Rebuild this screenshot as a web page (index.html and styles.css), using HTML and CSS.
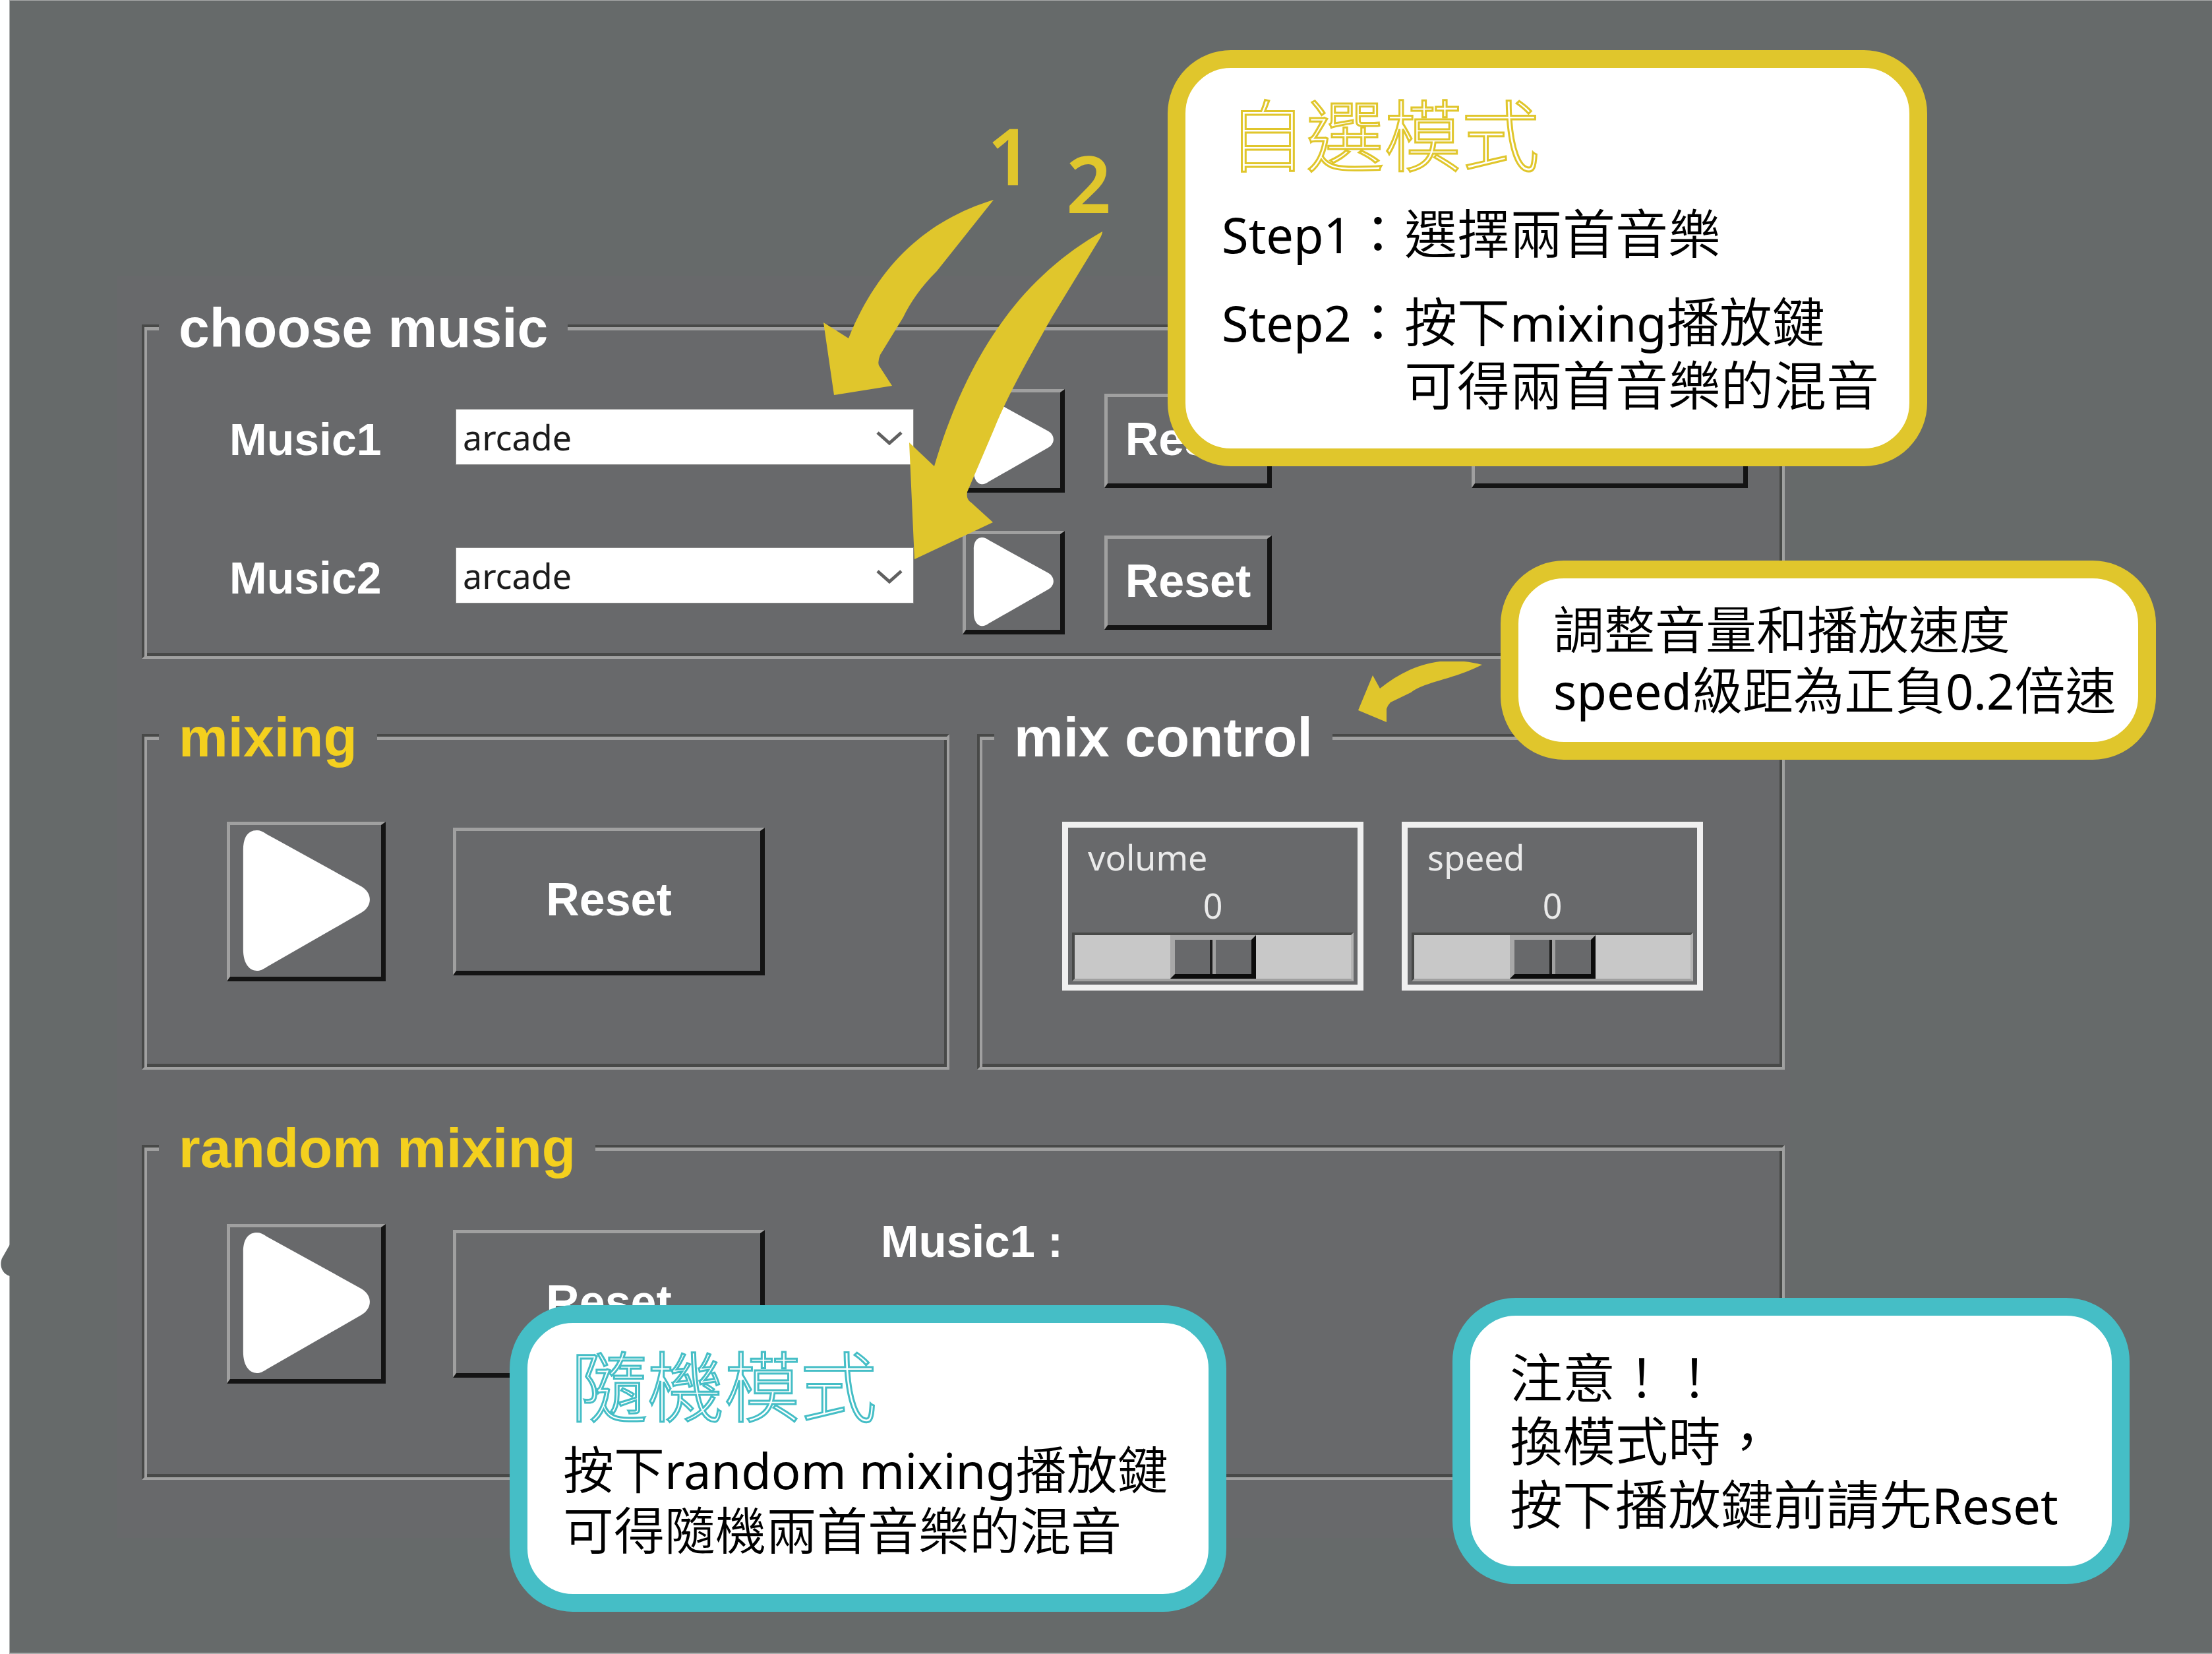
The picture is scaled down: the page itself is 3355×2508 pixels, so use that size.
FILE: index.html
```html
<!DOCTYPE html>
<html lang="zh-Hant">
<head>
<meta charset="utf-8">
<title>Music mixer guide</title>
<link rel="stylesheet" href="styles.css">
</head>
<body>
<main class="stage">
  <svg class="edge-notch" width="15" height="52" viewBox="0 0 15 52" aria-hidden="true"><path d="M15 0L3 21C-1 31 2 44 15 48Z"/></svg>

  <div class="mixer">
    <fieldset class="panel">
      <legend>choose music</legend>
      <div class="chooser">
        <div class="tracks">
          <label class="track-label" for="music1">Music1</label>
          <div class="picker">
            <select id="music1"><option>arcade</option></select>
            <svg width="40" height="26" viewBox="0 0 40 26" aria-hidden="true"><path d="M2 5L20 21L38 5"/></svg>
          </div>
          <label class="track-label" for="music2">Music2</label>
          <div class="picker">
            <select id="music2"><option>arcade</option></select>
            <svg width="40" height="26" viewBox="0 0 40 26" aria-hidden="true"><path d="M2 5L20 21L38 5"/></svg>
          </div>
        </div>
        <div class="track-buttons">
          <button class="play" type="button" aria-label="Play Music1"><svg viewBox="3 6 229 232" aria-hidden="true"><path d="M43 14C33 14 22 20 22 44V196C22 220 33 229 43 229C48 229 52 227 58 223L203 140C220 130 220 110 203 100L58 20C52 16 48 14 43 14Z"/></svg></button>
          <button class="reset" type="button">Reset</button>
          <button class="reset wide" type="button" aria-label="Reset all"></button>
          <button class="play" type="button" aria-label="Play Music2"><svg viewBox="3 6 229 232" aria-hidden="true"><path d="M43 14C33 14 22 20 22 44V196C22 220 33 229 43 229C48 229 52 227 58 223L203 140C220 130 220 110 203 100L58 20C52 16 48 14 43 14Z"/></svg></button>
          <button class="reset" type="button">Reset</button>
        </div>
      </div>
    </fieldset>

    <div class="pair">
      <fieldset class="panel">
        <legend class="gold">mixing</legend>
        <div class="deck">
          <button class="play large" type="button" aria-label="Play mix"><svg viewBox="3 6 229 232" aria-hidden="true"><path d="M43 14C33 14 22 20 22 44V196C22 220 33 229 43 229C48 229 52 227 58 223L203 140C220 130 220 110 203 100L58 20C52 16 48 14 43 14Z"/></svg></button>
          <button class="reset large" type="button">Reset</button>
        </div>
      </fieldset>
      <fieldset class="panel">
        <legend>mix control</legend>
        <div class="deck sliders">
          <div class="slider">
            <label for="volume">volume</label>
            <output for="volume">0</output>
            <input id="volume" type="range" min="-10" max="10" value="0">
          </div>
          <div class="slider">
            <label for="speed">speed</label>
            <output for="speed">0</output>
            <input id="speed" type="range" min="-10" max="10" value="0">
          </div>
        </div>
      </fieldset>
    </div>

    <fieldset class="panel">
      <legend class="gold">random mixing</legend>
      <div class="deck random">
        <button class="play large" type="button" aria-label="Play random mix"><svg viewBox="3 6 229 232" aria-hidden="true"><path d="M43 14C33 14 22 20 22 44V196C22 220 33 229 43 229C48 229 52 227 58 223L203 140C220 130 220 110 203 100L58 20C52 16 48 14 43 14Z"/></svg></button>
        <button class="reset large" type="button">Reset</button>
        <p class="now-playing">Music1 :</p>
      </div>
    </fieldset>
  </div>

  <svg class="arrow arrow-one" width="260" height="298" viewBox="1248 302 260 298" aria-hidden="true"><path d="M1507 303C1405 334 1332 402 1287 513L1249 489L1265 599L1353 585L1333 554Q1331 548 1335 538L1370 481C1380 460 1396 436 1421 411Z"/></svg>
  <svg class="arrow arrow-two" width="296" height="500" viewBox="1378 350 296 500" aria-hidden="true"><path d="M1672 351C1545 423 1466 543 1417 707L1379 671L1387 848L1506 792L1473 762Q1465 757 1467 746L1508 650C1530 596 1562 540 1596 480L1668 362Q1672 355 1672 351Z"/></svg>
  <svg class="arrow arrow-three" width="190" height="94" viewBox="2059 1003 190 94" aria-hidden="true"><path d="M2248 1008C2185 992 2137 1009 2093 1044L2082 1024L2060 1077L2103 1095V1075Q2105 1069 2109 1065L2140 1050C2160 1034 2205 1030 2248 1008Z"/></svg>
  <span class="number number-one">1</span>
  <span class="number number-two">2</span>

  <section class="callout pick">
    <h2>自選模式</h2>
    <dl class="steps">
      <dt><span class="latin">Step1</span>：</dt>
      <dd>選擇兩首音樂</dd>
      <dt><span class="latin">Step2</span>：</dt>
      <dd>按下<span class="latin">mixing</span>播放鍵<br>可得兩首音樂的混音</dd>
    </dl>
  </section>

  <section class="callout tune">
    <p>調整音量和播放速度<br><span class="latin">speed</span>級距為正負<span class="latin">0.2</span>倍速</p>
  </section>

  <section class="callout shuffle">
    <h2>隨機模式</h2>
    <p>按下<span class="latin">random mixing</span>播放鍵<br>可得隨機兩首音樂的混音</p>
  </section>

  <section class="callout notice">
    <p>注意！！<br>換模式時，<br>按下播放鍵前請先<span class="latin">Reset</span></p>
  </section>
</main>
</body>
</html>
```
FILE: styles.css
```css
:root {
  --base: #666a6a;
  --face: #68696b;
  --light: #a0a0a0;
  --dark: #484948;
  --shade: #141414;
  --yellow: #e0c62c;
  --teal: #45bec6;
}

* { box-sizing: border-box; }

body {
  margin: 0;
  background: #fff;
  font-family: "Liberation Sans", sans-serif;
}

.stage {
  position: relative;
  min-height: 100vh;
  margin-left: 14px;
  padding: 418px 48px 160px 162px;
  border: solid #a9abab;
  border-width: 1px 0 2px 1px;
  background: var(--base);
}

.edge-notch {
  position: absolute;
  left: -15px;
  top: 1886px;
  fill: var(--base);
}

/* Mixer window */

.mixer {
  display: flex;
  flex-direction: column;
  gap: 61px;
  max-width: 2538px;
  padding: 20px 8px 88px 38px;
  background: var(--face);
}

.pair {
  display: grid;
  grid-template-columns: 1fr 1fr;
  gap: 42px;
}

.panel {
  min-width: 0;
  margin: 0;
  padding: 0;
  border: 4px solid;
  border-color: var(--dark) var(--light) var(--light) var(--dark);
  box-shadow: inset 4px 5px 0 var(--light), inset -4px -5px 0 var(--dark);
}

legend {
  margin-left: 22px;
  padding: 8px 30px 2px;
  background: var(--face);
  color: #fff;
  font-size: 84px;
  font-weight: 700;
  line-height: 100px;
}

.gold { color: #f4d01e; }

.chooser {
  display: flex;
  gap: 74px;
  padding: 41px 0 33px 125px;
}

.tracks {
  display: grid;
  grid-template-columns: 347px 695px;
  grid-auto-rows: 85px;
  row-gap: 125px;
  padding-top: 30px;
}

.track-label {
  padding: 6px 0 0 4px;
  color: #fff;
  font-size: 68px;
  font-weight: 700;
  line-height: 80px;
}

.picker { position: relative; }

.picker select {
  width: 100%;
  height: 100%;
  padding: 0 10px;
  appearance: none;
  border: 1px solid #8c8c8c;
  border-radius: 0;
  background: #fff;
  color: #1c1c1c;
  font: 52px "Noto Sans", sans-serif;
}

.picker svg {
  position: absolute;
  right: 17px;
  top: 31px;
  fill: none;
  stroke: #606060;
  stroke-width: 5;
}

.track-buttons {
  display: grid;
  grid-template-columns: 155px 254px auto;
  grid-auto-rows: 157px;
  gap: 58px 60px;
  align-items: center;
}

button {
  margin: 0;
  padding: 0;
  border: solid;
  border-width: 5px 7px 7px 5px;
  border-color: var(--light) var(--shade) var(--shade) var(--light);
  background: var(--face);
  color: #fff;
  font: 700 70px "Liberation Sans", sans-serif;
}

.play {
  width: 155px;
  height: 157px;
}

.play.large {
  width: 241px;
  height: 242px;
}

.play svg {
  display: block;
  width: 100%;
  height: 100%;
  fill: #fff;
}

.reset {
  height: 143px;
  padding: 0 0 4px 2px;
}

.reset.large {
  width: 473px;
  height: 224px;
}

.reset.wide {
  width: 419px;
  margin-left: 243px;
}

.deck {
  display: flex;
  align-items: center;
  gap: 102px;
  padding: 76px 0 116px 125px;
}

.deck.random { padding: 63px 0 142px 125px; }

.deck.sliders {
  align-items: flex-start;
  gap: 58px;
}

.now-playing {
  align-self: flex-start;
  margin: 0 0 0 74px;
  color: #fff;
  font-size: 69px;
  font-weight: 700;
  line-height: 54px;
}

.slider {
  display: flex;
  flex-direction: column;
  width: 457px;
  padding: 15px 6px 5px;
  border: 9px solid #f0f0f0;
  color: #eaeaea;
  font: 52px/60px "Noto Sans", sans-serif;
}

.slider label { padding-left: 24px; }

.slider output {
  margin: 13px 0 11px;
  text-align: center;
}

.slider input {
  width: 100%;
  height: 74px;
  margin: 0;
  appearance: none;
  border: 4px solid;
  border-color: var(--dark) #b4b4b4 #a0a0a0 var(--dark);
  background: #c8c8c8;
}

.slider input::-webkit-slider-thumb {
  appearance: none;
  width: 130px;
  height: 66px;
  border: 7px solid;
  border-color: #a8a8a8 #0c0c0c #0c0c0c #a8a8a8;
  background: linear-gradient(90deg, var(--face) 53px, #1c1c1c 53px 57px, #a0a0a0 57px 62px, var(--face) 62px);
}

/* Guide overlay */

.arrow {
  position: absolute;
  fill: var(--yellow);
}

.arrow-one { left: 1233px; top: 301px; }
.arrow-two { left: 1363px; top: 349px; }
.arrow-three { left: 2044px; top: 1002px; }

.number {
  position: absolute;
  color: var(--yellow);
  font: 600 120px/124px "Noto Sans", sans-serif;
}

.number-one { left: 1482px; top: 172px; }
.number-two { left: 1602px; top: 214px; }

.callout {
  position: absolute;
  border: 27px solid var(--yellow);
  border-radius: 96px;
  background: #fff;
  color: #000;
  font: 350 77px/92px "Noto Sans CJK TC", sans-serif;
  white-space: nowrap;
}

.callout p { margin: 0; }

.callout h2 {
  margin: 0;
  color: transparent;
  font-size: 118px;
  font-weight: 300;
  line-height: 120px;
  -webkit-text-stroke: 3px var(--yellow);
}

.latin {
  font-family: "Noto Sans", sans-serif;
  font-size: 74px;
  font-weight: 400;
  line-height: 1;
}

.pick {
  left: 1756px;
  top: 75px;
  width: 1152px;
  padding: 37px 0 53px 55px;
  font-size: 80px;
  line-height: 96px;
}

.pick h2 { padding-left: 10px; }

.steps {
  display: grid;
  grid-template-columns: max-content 1fr;
  row-gap: 38px;
  margin: 41px 0 0;
}

.steps dt { text-align: right; }
.steps dd { margin: 0; }

.tune {
  left: 2261px;
  top: 849px;
  width: 994px;
  padding: 28px 0 36px 53px;
}

.shuffle {
  left: 758px;
  top: 1978px;
  width: 1087px;
  padding: 30px 0 54px 54px;
  border-color: var(--teal);
}

.shuffle h2 {
  padding-left: 12px;
  margin-bottom: 23px;
  font-size: 116px;
  -webkit-text-stroke-color: var(--teal);
}

.notice {
  left: 2188px;
  top: 1967px;
  width: 1027px;
  padding: 41px 0 51px 60px;
  border-color: var(--teal);
  font-size: 80px;
  line-height: 96px;
}
```
